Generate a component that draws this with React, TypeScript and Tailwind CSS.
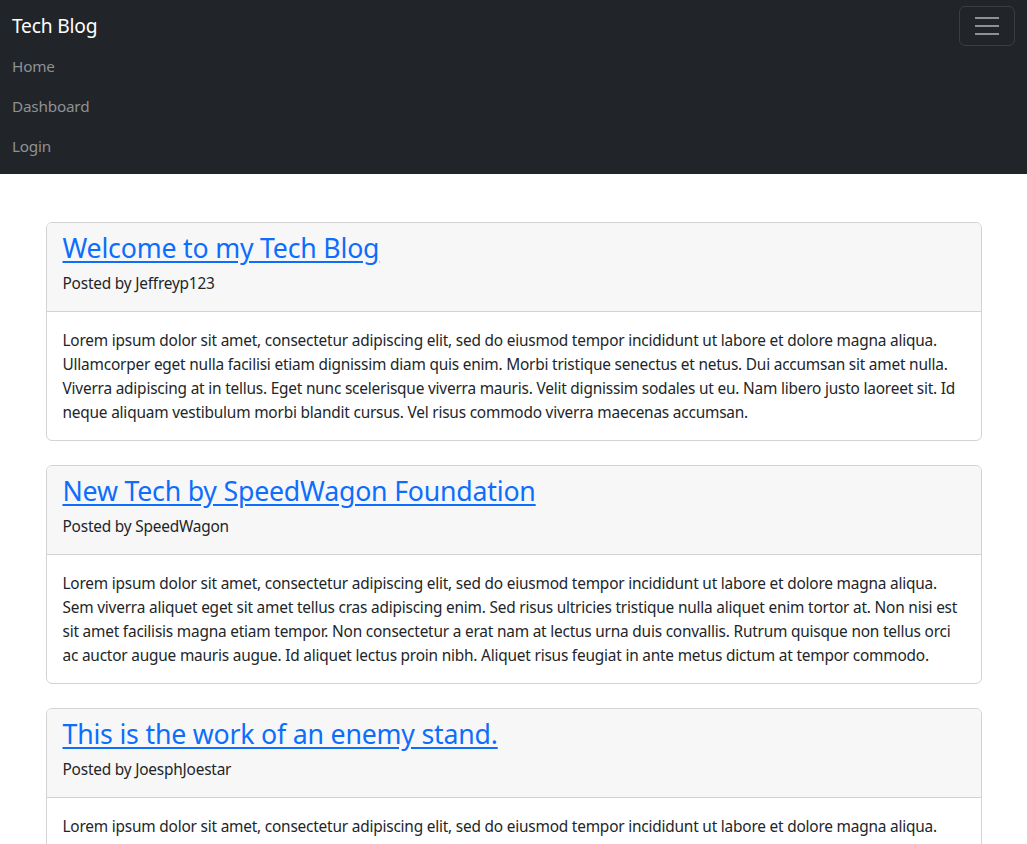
const posts = [
  {
    title: 'Welcome to my Tech Blog',
    author: 'Jeffreyp123',
    body: 'Lorem ipsum dolor sit amet, consectetur adipiscing elit, sed do eiusmod tempor incididunt ut labore et dolore magna aliqua. Ullamcorper eget nulla facilisi etiam dignissim diam quis enim. Morbi tristique senectus et netus. Dui accumsan sit amet nulla. Viverra adipiscing at in tellus. Eget nunc scelerisque viverra mauris. Velit dignissim sodales ut eu. Nam libero justo laoreet sit. Id neque aliquam vestibulum morbi blandit cursus. Vel risus commodo viverra maecenas accumsan.',
  },
  {
    title: 'New Tech by SpeedWagon Foundation',
    author: 'SpeedWagon',
    body: 'Lorem ipsum dolor sit amet, consectetur adipiscing elit, sed do eiusmod tempor incididunt ut labore et dolore magna aliqua. Sem viverra aliquet eget sit amet tellus cras adipiscing enim. Sed risus ultricies tristique nulla aliquet enim tortor at. Non nisi est sit amet facilisis magna etiam tempor. Non consectetur a erat nam at lectus urna duis convallis. Rutrum quisque non tellus orci ac auctor augue mauris augue. Id aliquet lectus proin nibh. Aliquet risus feugiat in ante metus dictum at tempor commodo.',
  },
  {
    title: 'This is the work of an enemy stand.',
    author: 'JoesphJoestar',
    body: 'Lorem ipsum dolor sit amet, consectetur adipiscing elit, sed do eiusmod tempor incididunt ut labore et dolore magna aliqua. Viverra nam libero justo laoreet sit amet cursus sit amet. Tellus in metus vulputate eu scelerisque felis imperdiet proin. Amet nisl suscipit adipiscing bibendum est ultricies integer quis.',
  },
]

function Navbar() {
  return (
    <nav className="bg-[#212529] px-3 pt-[6px] pb-2">
      <div className="flex items-center justify-between">
        <a href="#" className="text-[19.2px] leading-[30px] py-[5px] text-white">Tech Blog</a>
        <button className="w-[56px] h-[40px] rounded-[6px] border border-[#3a3d41] flex items-center justify-center">
          <svg width="30" height="30" viewBox="0 0 30 30">
            <path d="M3 7h24M3 15h24M3 23h24" stroke="#8f9194" strokeWidth="2" />
          </svg>
        </button>
      </div>
      <ul className="flex flex-col">
        {['Home', 'Dashboard', 'Login'].map(l => (
          <li key={l}>
            <a href="#" className="block py-2 text-[15.3px] leading-6 text-[#8f9194]">{l}</a>
          </li>
        ))}
      </ul>
    </nav>
  )
}

function PostCard({ title, author, body }: { title: string; author: string; body: string }) {
  return (
    <div className="mb-6 rounded-[6px] border border-[#d3d3d3] bg-white overflow-hidden">
      <div className="bg-[#f7f7f7] border-b border-[#d3d3d3] px-4 pt-2 pb-[7px]">
        <h2 className="text-[26.7px] leading-[34px] mb-[7px]">
          <a href="#" className="text-[#0d6efd] underline underline-offset-[3px]">{title}</a>
        </h2>
        <p className="mb-2 leading-6">Posted by {author}</p>
      </div>
      <div className="px-4 pt-[17px] pb-[15px]">
        <p className="leading-6">{body}</p>
      </div>
    </div>
  )
}

export default function App() {
  return (
    <div className="min-h-screen bg-white text-[#212529] text-[15.4px] font-['Noto_Sans',sans-serif] tracking-[-0.2px]">
      <Navbar />
      <main className="max-w-[960px] mx-auto px-3 mt-12">
        {posts.map(p => (
          <PostCard key={p.title} {...p} />
        ))}
      </main>
    </div>
  )
}
